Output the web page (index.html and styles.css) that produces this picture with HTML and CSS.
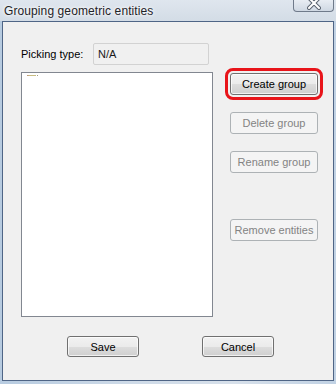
FILE: index.html
```html
<!DOCTYPE html>
<html>
<head>
<meta charset="utf-8">
<link rel="stylesheet" href="styles.css">
</head>
<body>
<div class="window">
  <div class="titlebar">
    <span class="title">Grouping geometric entities</span>
    <div class="close">
      <svg width="14" height="10" viewBox="0 0 14 10">
        <path d="M2 -2 L12 8 M12 -2 L2 8" stroke="#5b6470" stroke-width="4" stroke-linecap="round"/>
        <path d="M2 -2 L12 8 M12 -2 L2 8" stroke="#ffffff" stroke-width="2" stroke-linecap="round"/>
      </svg>
    </div>
  </div>
  <div class="client">
    <div class="pick-row">
      <span class="label">Picking type:</span>
      <div class="field">N/A</div>
    </div>
    <div class="main">
      <div class="list">
        <div class="mark"><span class="mark-line"></span><span class="mark-dot"></span></div>
      </div>
      <div class="actions">
        <button class="btn highlight">Create group</button>
        <button class="btn" disabled>Delete group</button>
        <button class="btn" disabled>Rename group</button>
        <button class="btn gap-lg" disabled>Remove entities</button>
      </div>
    </div>
    <div class="footer">
      <button class="btn small save">Save</button>
      <button class="btn small cancel">Cancel</button>
    </div>
  </div>
</div>
</body>
</html>
```
FILE: styles.css
```css
html, body {
  margin: 0;
  padding: 0;
}
body {
  width: 336px;
  height: 384px;
  overflow: hidden;
  background: linear-gradient(90deg, #b7cbe0 0%, #cfdbe8 40%, #d7e0ea 70%, #c1d2e4 100%);
  font-family: "Liberation Sans", Arial, sans-serif;
  font-size: 11px;
}
.window {
  width: 336px;
  height: 384px;
  display: flex;
  flex-direction: column;
}
.titlebar {
  height: 21px;
  display: flex;
  justify-content: space-between;
  align-items: flex-start;
  background: linear-gradient(180deg, #dfe6ee 0%, #d3dce6 100%);
}
.title {
  margin: 4px 0 0 4px;
  font-size: 12px;
  color: #1f2328;
  text-shadow: 0 0 5px #ffffff, 0 0 3px #ffffff;
  letter-spacing: 0.1px;
}
.close {
  width: 41px;
  height: 12px;
  margin-right: 2px;
  box-sizing: border-box;
  border: 1px solid #6f7a8a;
  border-top: none;
  border-radius: 0 0 4px 4px;
  background: linear-gradient(180deg, #e8edf3 0%, #cfd8e3 100%);
  display: flex;
  justify-content: center;
  align-items: flex-start;
}
.client {
  margin: 0 2px 3px 2px;
  height: 360px;
  box-sizing: border-box;
  border: 1px solid #4f6586;
  background: #f0f0f0;
  padding: 21px 0 0 18px;
  color: #000;
}
.pick-row {
  display: flex;
  align-items: center;
  height: 22px;
}
.label {
  width: 72px;
  color: #000;
}
.field {
  width: 116px;
  height: 22px;
  box-sizing: border-box;
  border: 1px solid #d2d2d2;
  border-radius: 2px;
  background: #f0f0f0;
  padding: 4px 0 0 4px;
  color: #1a1a1a;
}
.main {
  display: flex;
  margin-top: 7px;
}
.list {
  width: 192px;
  height: 245px;
  box-sizing: border-box;
  border: 1px solid #828790;
  background: #ffffff;
  padding: 2px 0 0 5px;
}
.mark {
  display: flex;
  align-items: flex-start;
  height: 1px;
}
.mark-line {
  width: 9px;
  height: 1px;
  background: linear-gradient(90deg, #c0907a, #c8bd82 30%, #c8bd82);
}
.mark-dot {
  width: 1px;
  height: 1px;
  margin-left: 1px;
  background: #a09a80;
}
.actions {
  display: flex;
  flex-direction: column;
  margin-left: 17px;
  padding-top: 1px;
  gap: 17px;
}
.btn {
  width: 88px;
  height: 22px;
  box-sizing: border-box;
  border: 1px solid #707070;
  border-radius: 3px;
  background: linear-gradient(180deg, #f2f2f2 0%, #ebebeb 50%, #dddddd 51%, #cfcfcf 100%);
  box-shadow: inset 0 0 0 1px rgba(255,255,255,0.7);
  font-family: "Liberation Sans", Arial, sans-serif;
  font-size: 11px;
  color: #000;
  padding: 0;
  margin: 0;
}
.btn:disabled {
  border-color: #adb2b5;
  background: #f4f4f4;
  box-shadow: none;
  color: #838383;
}
.btn.highlight {
  outline: 3px solid #e8141a;
  outline-offset: 2px;
  border-radius: 3px;
}
.btn.gap-lg {
  margin-top: 29px;
}
.footer {
  display: flex;
  margin-top: 19px;
}
.btn.small {
  width: 72px;
  height: 21px;
}
.save {
  margin-left: 46px;
}
.cancel {
  margin-left: 63px;
}
```
